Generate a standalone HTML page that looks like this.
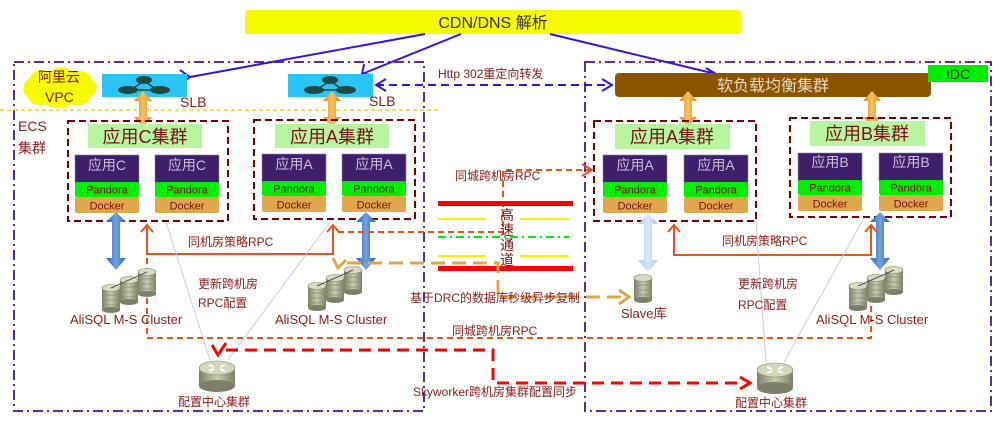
<!DOCTYPE html>
<html><head><meta charset="utf-8"><style>
html,body{margin:0;padding:0;background:#fff;}
svg{display:block;font-family:"Liberation Sans","Noto Sans CJK SC",sans-serif;}
</style></head><body>
<svg width="1004" height="424" viewBox="0 0 1004 424" xmlns="http://www.w3.org/2000/svg">
<defs>
<linearGradient id="cyl" x1="0" x2="1"><stop offset="0" stop-color="#7d8066"/><stop offset=".5" stop-color="#c9ccb0"/><stop offset="1" stop-color="#7d8066"/></linearGradient>
<linearGradient id="blu" x1="0" x2="1"><stop offset="0" stop-color="#2b66b8"/><stop offset=".5" stop-color="#6fa3e0"/><stop offset="1" stop-color="#2b66b8"/></linearGradient>
<linearGradient id="lblu" x1="0" x2="1"><stop offset="0" stop-color="#a9c6e8"/><stop offset=".5" stop-color="#dce9f7"/><stop offset="1" stop-color="#a9c6e8"/></linearGradient>
<linearGradient id="org" x1="0" x2="1"><stop offset="0" stop-color="#e08a1a"/><stop offset=".5" stop-color="#f8c060"/><stop offset="1" stop-color="#e08a1a"/></linearGradient>
<g id="cy"><rect x="0" y="4" width="18" height="22" fill="url(#cyl)"/><ellipse cx="9" cy="26" rx="9" ry="3" fill="#7d8066"/><ellipse cx="9" cy="4" rx="9" ry="3.5" fill="#d8dbc2" stroke="#7d8066" stroke-width=".6"/><path d="M0 11h18M0 16h18M0 21h18" stroke="#8a8d70" stroke-width=".7"/></g>
<g id="db3"><use href="#cy" x="36" y="0"/><use href="#cy" x="18" y="8"/><use href="#cy" x="0" y="16"/><path d="M9 20L45 4" stroke="#555" stroke-width="1"/></g>
<g id="rt"><rect x="-18" y="0" width="36" height="18" fill="url(#cyl)"/><ellipse cx="0" cy="18" rx="18" ry="6" fill="#7d8066"/><ellipse cx="0" cy="0" rx="18" ry="7" fill="#d4d7bd" stroke="#8a8d70" stroke-width=".6"/><path d="M-8-3l5 2M8-3l-5 2M-8 3l5-2M8 3l-5-2" stroke="#fff" stroke-width="2"/></g>
<g id="slbi"><ellipse cx="0" cy="-6" rx="8" ry="4" fill="#1e4a44"/><ellipse cx="-16" cy="4" rx="10" ry="4" fill="#1e4a44"/><ellipse cx="16" cy="4" rx="10" ry="4" fill="#1e4a44"/><path d="M-3-3l-9 6M3-3l9 6M-8 4h16" stroke="#1e4a44" stroke-width="1.5"/></g>
<g id="app"><rect x="0" y="0" width="64" height="28" fill="#3f1f6b" stroke="#8a84a8" stroke-width=".6"/><rect x="0" y="27" width="64" height="15" rx="2" fill="#00ee00"/><rect x="0" y="42" width="64" height="16" rx="2" fill="#e0a84c"/><text x="32" y="38.5" font-size="11" fill="#7a1010" text-anchor="middle">Pandora</text><text x="32" y="54.5" font-size="11" fill="#7a1010" text-anchor="middle">Docker</text></g>
<g id="oda"><path d="M-4-8v16h-5l9 10 9-10h-5v-16h5l-9-10-9 10z" fill="url(#org)"/></g>
</defs>

<rect x="14" y="62" width="410" height="349" fill="none" stroke="#5b2d9e" stroke-width="2" stroke-dasharray="10,4,2,4"/>
<rect x="585" y="62" width="406" height="349" fill="none" stroke="#5b2d9e" stroke-width="2" stroke-dasharray="10,4,2,4"/>
<line x1="0" y1="110" x2="440" y2="110" stroke="#f0e000" stroke-width="1.5" stroke-dasharray="4,3"/>

<rect x="245" y="10" width="496" height="24" rx="3" fill="#f8fa00"/>
<text x="493" y="28" font-size="16" fill="#333" text-anchor="middle">CDN/DNS 解析</text>
<g stroke="#3a10e8" stroke-width="2" fill="none">
<path d="M425 34L190 77M180 70l10 7-8 6"/>
<path d="M461 34L362 74M364 64l-2 10 10 1"/>
<path d="M550 34L716 74M706 68l10 6-10 4"/>
<path d="M376 85H610" stroke-dasharray="8,5"/><path d="M386 79l-10 6 10 6M602 79l10 6-10 6"/>
</g>
<text x="438" y="78" font-size="12" fill="#8b1a1a">Http 302重定向转发</text>

<path d="M30 78c2-8 14-10 20-6 4-6 18-6 22 0 8-3 20 1 20 8 7 3 6 14-2 17 0 7-12 10-20 7-5 6-20 5-24 0-8 3-18-1-18-7-7-3-6-15 2-19z" fill="#f8fa00"/>
<text x="38" y="82" font-size="14" fill="#8b1a1a">阿里云</text>
<text x="45" y="102" font-size="14" fill="#8b1a1a">VPC</text>

<rect x="102" y="74" width="85" height="23" fill="#29c5f6"/><use href="#slbi" x="144" y="86"/>
<rect x="288" y="74" width="85" height="23" fill="#29c5f6"/><use href="#slbi" x="330" y="86"/>
<text x="180" y="107" font-size="14" fill="#8b1a1a">SLB</text>
<text x="369" y="106" font-size="14" fill="#8b1a1a">SLB</text>
<text x="18" y="131" font-size="14" fill="#8b1a1a">ECS</text>
<text x="18" y="153" font-size="14" fill="#8b1a1a">集群</text>

<rect x="615" y="73" width="316" height="24" rx="4" fill="#8b5500"/>
<text x="773" y="91" font-size="16" fill="#e8d8c0" text-anchor="middle">软负载均衡集群</text>
<rect x="928" y="65" width="60" height="17" fill="#00ee00"/>
<text x="958" y="79" font-size="14" fill="#333" text-anchor="middle">IDC</text>

<use href="#oda" x="143" y="109"/><use href="#oda" x="332" y="109"/>
<use href="#oda" x="688" y="109"/><use href="#oda" x="872" y="109"/>

<g fill="none" stroke="#7a0000" stroke-width="2" stroke-dasharray="7,4">
<rect x="68" y="121" width="160" height="100"/><rect x="254" y="120" width="161" height="99"/>
<rect x="594" y="121" width="162" height="100"/><rect x="790" y="118" width="161" height="99"/>
</g>
<g font-size="18" fill="#7a1010" text-anchor="middle">
<rect x="88" y="124" width="114" height="24" fill="#b8f5a0"/><text x="145" y="143">应用C集群</text>
<rect x="275" y="124" width="114" height="24" fill="#b8f5a0"/><text x="332" y="143">应用A集群</text>
<rect x="615" y="124" width="115" height="25" fill="#b8f5a0"/><text x="672" y="143">应用A集群</text>
<rect x="810" y="121" width="115" height="25" fill="#b8f5a0"/><text x="867" y="140">应用B集群</text>
</g>
<use href="#app" x="75" y="155"/><use href="#app" x="155" y="155"/>
<use href="#app" x="262" y="154"/><use href="#app" x="342" y="154"/>
<use href="#app" x="603" y="155"/><use href="#app" x="684" y="155"/>
<use href="#app" x="798" y="153"/><use href="#app" x="879" y="153"/>
<g font-size="14" fill="#c8c0d8" text-anchor="middle">
<text x="107" y="170">应用C</text><text x="187" y="170">应用C</text>
<text x="294" y="169">应用A</text><text x="374" y="169">应用A</text>
<text x="635" y="170">应用A</text><text x="716" y="170">应用A</text>
<text x="830" y="167">应用B</text><text x="911" y="167">应用B</text>
</g>

<path d="M112 222v36h-6l10 12 10-12h-6v-36l6 0-10-10-10 10z" fill="url(#blu)"/>
<path d="M362 222v36h-6l10 12 10-12h-6v-36l6 0-10-10-10 10z" fill="url(#blu)"/>
<path d="M644 224v36h-6l10 12 10-12h-6v-36l6 0-10-10-10 10z" fill="url(#lblu)"/>
<path d="M876 222v36h-6l10 12 10-12h-6v-36l6 0-10-10-10 10z" fill="url(#blu)"/>

<g stroke="#f05010" stroke-width="2" fill="none">
<path d="M147 226V254H333V226M141 232l6-7 6 7M327 232l6-7 6 7"/>
<path d="M674 226V255H871V226M668 232l6-7 6 7M865 232l6-7 6 7"/>
</g>
<text x="188" y="246" font-size="12" fill="#8b1a1a">同机房策略RPC</text>
<text x="722" y="245" font-size="12" fill="#8b1a1a">同机房策略RPC</text>

<g stroke="#c8c8f0" stroke-width="1"><path d="M166 222L210 360M330 222L228 360M756 222L766 362M864 218L784 362"/></g>

<g stroke="#f05010" stroke-width="2" fill="none" stroke-dasharray="6,4">
<path d="M147 258V338H871V272"/>
<path d="M338 232H503V170H590"/>
</g>
<path d="M582 164l10 6-10 6" stroke="#f05010" stroke-width="2" fill="none"/>
<text x="455" y="180" font-size="12" fill="#8b1a1a">同城跨机房RPC</text>
<text x="452" y="335" font-size="12" fill="#8b1a1a">同城跨机房RPC</text>

<rect x="438" y="201" width="135" height="5" fill="#ff0000"/>
<rect x="438" y="266" width="135" height="5" fill="#ff0000"/>
<path d="M438 219H486M520 219H569M438 256H486M520 256H569" stroke="#f8f000" stroke-width="2"/>
<path d="M438 237H569" stroke="#00ee00" stroke-width="2" stroke-dasharray="8,4,2,4"/>
<text font-size="14" fill="#7a1010" text-anchor="middle"><tspan x="507" y="220">高</tspan><tspan x="507" y="235">速</tspan><tspan x="507" y="250">通</tspan><tspan x="507" y="265">道</tspan></text>

<path d="M347 263H498V297H625" stroke="#e0a840" stroke-width="3" fill="none" stroke-dasharray="14,7"/>
<path d="M619 290l10 7-10 7" stroke="#e0a840" stroke-width="3" fill="none"/>
<path d="M333 258l5 10 8-8" stroke="#e0a840" stroke-width="3" fill="none"/>
<text x="410" y="302" font-size="12" fill="#8b1a1a">基于DRC的数据库秒级异步复制</text>

<use href="#db3" x="102" y="268"/><use href="#db3" x="308" y="266"/><use href="#db3" x="849" y="266"/>
<use href="#cy" x="634" y="274"/>
<g font-size="13" fill="#8b1a1a">
<text x="70" y="324">AliSQL M-S Cluster</text><text x="275" y="324">AliSQL M-S Cluster</text>
<text x="816" y="324">AliSQL M-S Cluster</text><text x="621" y="318">Slave库</text>
<text x="198" y="288" font-size="12">更新跨机房</text><text x="198" y="307" font-size="12">RPC配置</text>
<text x="738" y="288" font-size="12">更新跨机房</text><text x="738" y="309" font-size="12">RPC配置</text>
</g>

<path d="M226 350H493V383H742" stroke="#ff0000" stroke-width="3" fill="none" stroke-dasharray="12,7"/>
<path d="M212 345l6 10 8-12M740 377l10 6-10 6" stroke="#ff0000" stroke-width="3" fill="none"/>
<text x="413" y="396" font-size="12" fill="#8b1a1a">Skyworker跨机房集群配置同步</text>

<use href="#rt" x="217" y="368"/><use href="#rt" x="775" y="370"/>
<text x="178" y="406" font-size="12" fill="#8b1a1a">配置中心集群</text>
<text x="735" y="407" font-size="12" fill="#8b1a1a">配置中心集群</text>
</svg>
</body></html>
